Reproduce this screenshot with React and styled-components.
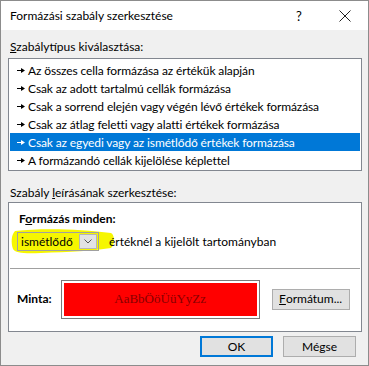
import React from "react";
import styled, { createGlobalStyle } from "styled-components";

const GlobalStyle = createGlobalStyle`
  html, body {
    margin: 0;
    padding: 0;
    background: #ffffff;
  }
  body {
    font-family: Lato, "Segoe UI", "Noto Sans", sans-serif;
    font-size: 12px;
    color: #000;
  }
`;

const rules = [
  "Az összes cella formázása az értékük alapján",
  "Csak az adott tartalmú cellák formázása",
  "Csak a sorrend elején vagy végén lévő értékek formázása",
  "Csak az átlag feletti vagy alatti értékek formázása",
  "Csak az egyedi vagy az ismétlődő értékek formázása",
  "A formázandó cellák kijelölése képlettel",
];

const Arrow = ({ color }) => (
  <svg width="8" height="7" viewBox="0 0 8 7">
    <rect x="0" y="3" width="5" height="1" fill={color} />
    <polygon points="4,1 8,3.5 4,6" fill={color} />
  </svg>
);

const Chevron = () => (
  <svg width="8" height="5" viewBox="0 0 8 5">
    <polyline points="0.5,0.5 4,4 7.5,0.5" fill="none" stroke="#555" strokeWidth="1" />
  </svg>
);

export default function App() {
  return (
    <>
      <GlobalStyle />
      <Window>
        <TitleBar>
          <Title>Formázási szabály szerkesztése</Title>
          <TitleButton>?</TitleButton>
          <CloseButton>
            <svg width="12" height="12" viewBox="0 0 12 12">
              <path d="M0.5 0.5 L11.5 11.5 M11.5 0.5 L0.5 11.5" stroke="#222" strokeWidth="1" />
            </svg>
          </CloseButton>
        </TitleBar>
        <Body>
          <Label>
            <u>S</u>zabálytípus kiválasztása:
          </Label>
          <ListBox>
            {rules.map((r, i) => (
              <RuleRow key={r} $selected={i === 4}>
                <Arrow color={i === 4 ? "#fff" : "#000"} />
                <span>{r}</span>
              </RuleRow>
            ))}
          </ListBox>
          <Label $top={14}>
            Szabály <u>l</u>eírásának szerkesztése:
          </Label>
          <Panel>
            <PanelTop>
              <Bold>
                F<u>o</u>rmázás minden:
              </Bold>
              <SelectLine>
                <Highlight width="104" height="28" viewBox="0 0 104 28">
                  <path
                    d="M4 4 C30 1 70 2 100 6 C104 8 104 18 100 21 C80 24 60 25 30 26 C14 27 4 26 2 22 C0 16 0 8 4 4 Z"
                    fill="#f6f600"
                  />
                </Highlight>
                <Select>
                  <SelectText>ismétlődő</SelectText>
                  <DropButton>
                    <Chevron />
                  </DropButton>
                </Select>
                <Sentence>értéknél a kijelölt tartományban</Sentence>
              </SelectLine>
            </PanelTop>
            <PanelBottom>
              <Bold>Minta:</Bold>
              <Preview>
                <PreviewFill>AaBbÖöÜüYyZz</PreviewFill>
              </Preview>
              <Button $w={78}>
                <u>F</u>ormátum...
              </Button>
            </PanelBottom>
          </Panel>
          <ButtonRow>
            <Button $w={73} $default>
              OK
            </Button>
            <Button $w={73}>Mégse</Button>
          </ButtonRow>
        </Body>
      </Window>
    </>
  );
}

const Window = styled.div`
  width: 369px;
  height: 366px;
  box-sizing: border-box;
  border: 1px solid #8c8c8c;
  display: flex;
  flex-direction: column;
  background: #f0f0f0;
`;

const TitleBar = styled.div`
  height: 29px;
  background: #fff;
  display: flex;
  align-items: center;
  padding-left: 9px;
  flex-shrink: 0;
`;

const Title = styled.div`
  flex: 1;
  font-size: 12px;
  line-height: 16px;
  padding-top: 1px;
`;

const TitleButton = styled.div`
  width: 46px;
  text-align: center;
  font-size: 13px;
  padding-left: 3px;
`;

const CloseButton = styled.div`
  width: 46px;
  display: flex;
  justify-content: center;
  align-items: center;
`;

const Body = styled.div`
  flex: 1;
  display: flex;
  flex-direction: column;
  padding: 9px 6px 0 7px;
`;

const Label = styled.div`
  line-height: 16px;
  height: 16px;
  margin-top: ${(p) => p.$top || 0}px;
  margin-bottom: ${(p) => (p.$top ? 1 : 3)}px;
  padding-left: 2px;
  white-space: nowrap;
`;

const ListBox = styled.div`
  background: #fff;
  border: 1px solid #828790;
  padding: 2px 1px 1px 1px;
  display: flex;
  flex-direction: column;
`;

const RuleRow = styled.div`
  height: 18px;
  display: flex;
  align-items: center;
  gap: 3px;
  padding-left: 7px;
  white-space: nowrap;
  letter-spacing: -0.12px;
  background: ${(p) => (p.$selected ? "#0078d7" : "transparent")};
  color: ${(p) => (p.$selected ? "#fff" : "#000")};
`;

const Panel = styled.div`
  background: #fff;
  border: 1px solid #828790;
  height: 128px;
  display: flex;
  flex-direction: column;
`;

const PanelTop = styled.div`
  padding: 8px 0 0 9px;
  height: 57px;
  border-bottom: 1px solid #a0a0a0;
  margin: 0 1px;
`;

const Bold = styled.div`
  font-weight: bold;
  line-height: 16px;
  white-space: nowrap;
`;

const SelectLine = styled.div`
  position: relative;
  margin-top: 5px;
  display: flex;
  align-items: center;
  gap: 10px;
`;

const Highlight = styled.svg`
  position: absolute;
  left: -8px;
  top: -5px;
`;

const Select = styled.div`
  position: relative;
  width: 80px;
  height: 17px;
  border: 1px solid #a0a0a0;
  display: flex;
  align-items: center;
  justify-content: space-between;
  margin-left: -2px;
`;

const SelectText = styled.span`
  padding-left: 3px;
  line-height: 16px;
`;

const DropButton = styled.div`
  width: 18px;
  height: 15px;
  background: #e3e3e3;
  border: 1px solid #b5b5b5;
  box-sizing: border-box;
  display: flex;
  align-items: center;
  justify-content: center;
  margin-right: 1px;
`;

const Sentence = styled.span`
  position: relative;
  white-space: nowrap;
`;

const PanelBottom = styled.div`
  flex: 1;
  display: flex;
  align-items: center;
  padding: 0 0 2px 8px;
`;

const Preview = styled.div`
  width: 199px;
  height: 39px;
  margin-left: 9px;
  border: 1px solid #7a7a7a;
  padding: 2px;
  box-sizing: border-box;
  background: #fff;
  display: flex;
`;

const PreviewFill = styled.div`
  flex: 1;
  background: #ff0000;
  color: #870000;
  font-family: "Liberation Serif", "Times New Roman", serif;
  font-size: 13px;
  display: flex;
  align-items: center;
  justify-content: center;
`;

const Button = styled.div`
  width: ${(p) => p.$w}px;
  height: 21px;
  box-sizing: border-box;
  border: ${(p) => (p.$default ? "2px solid #0078d7" : "1px solid #adadad")};
  background: #e1e1e1;
  display: flex;
  align-items: center;
  justify-content: center;
  margin-left: 12px;
  white-space: nowrap;
  line-height: 16px;
`;

const ButtonRow = styled.div`
  display: flex;
  justify-content: flex-end;
  gap: 10px;
  margin-top: 4px;
  padding-right: 6px;

  & > div {
    margin-left: 0;
  }
`;
